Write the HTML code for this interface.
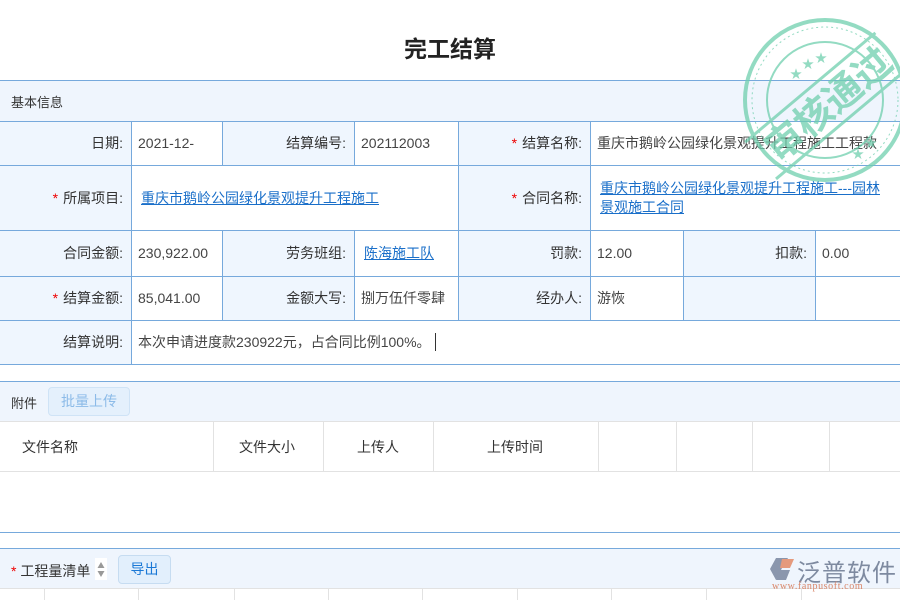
<!DOCTYPE html>
<html><head><meta charset="utf-8"><style>
*{margin:0;padding:0;box-sizing:border-box}
body{width:900px;height:600px;overflow:hidden;background:#fff;position:relative;font-family:"Liberation Sans","Noto Sans CJK SC",sans-serif;font-size:14px;color:#333}
.a{position:absolute}
.c{position:absolute;display:flex;align-items:center}
.l{background:#eff6fe;justify-content:flex-end;padding-right:8px;color:#333}
.v{background:#fff;padding-left:7px;color:#444}
.r{color:#e00;margin-right:5px}
a{color:#1a6fc9;text-decoration:underline}
.hl{position:absolute;left:0;width:900px;height:1px;background:#76a9dc}
.vl{position:absolute;width:1px;background:#76a9dc}
.g{position:absolute;width:1px;background:#e2e2e2}
</style></head><body>
<div class="a" style="left:0;top:30px;width:900px;text-align:center;font-size:23px;font-weight:bold;color:#222">完工结算</div>

<div class="a" style="left:0;top:80px;width:900px;height:41px;background:#eff5fd"></div>
<div class="a" style="left:11px;top:92px;font-size:13px;color:#333">基本信息</div>

<div class="c l" style="left:0;top:121px;width:131px;height:44px">日期:</div>
<div class="c v" style="left:131px;top:121px;width:91px;height:44px">2021-12-</div>
<div class="c l" style="left:222px;top:121px;width:132px;height:44px">结算编号:</div>
<div class="c v" style="left:354px;top:121px;width:104px;height:44px">202112003</div>
<div class="c l" style="left:458px;top:121px;width:132px;height:44px"><span class="r">*</span>结算名称:</div>
<div class="c v" style="left:590px;top:121px;width:310px;height:44px;white-space:nowrap">重庆市鹅岭公园绿化景观提升工程施工工程款</div>

<div class="c l" style="left:0;top:165px;width:131px;height:65px"><span class="r">*</span>所属项目:</div>
<div class="c v" style="left:131px;top:165px;width:327px;height:65px;padding-left:10px"><a>重庆市鹅岭公园绿化景观提升工程施工</a></div>
<div class="c l" style="left:458px;top:165px;width:132px;height:65px"><span class="r">*</span>合同名称:</div>
<div class="c v" style="left:590px;top:165px;width:310px;height:65px;padding-left:10px;padding-right:12px;line-height:19px"><a>重庆市鹅岭公园绿化景观提升工程施工---园林景观施工合同</a></div>

<div class="c l" style="left:0;top:230px;width:131px;height:46px">合同金额:</div>
<div class="c v" style="left:131px;top:230px;width:91px;height:46px">230,922.00</div>
<div class="c l" style="left:222px;top:230px;width:132px;height:46px">劳务班组:</div>
<div class="c v" style="left:354px;top:230px;width:104px;height:46px;padding-left:10px"><a>陈海施工队</a></div>
<div class="c l" style="left:458px;top:230px;width:132px;height:46px">罚款:</div>
<div class="c v" style="left:590px;top:230px;width:93px;height:46px">12.00</div>
<div class="c l" style="left:683px;top:230px;width:132px;height:46px">扣款:</div>
<div class="c v" style="left:815px;top:230px;width:85px;height:46px">0.00</div>

<div class="c l" style="left:0;top:276px;width:131px;height:44px"><span class="r">*</span>结算金额:</div>
<div class="c v" style="left:131px;top:276px;width:91px;height:44px">85,041.00</div>
<div class="c l" style="left:222px;top:276px;width:132px;height:44px">金额大写:</div>
<div class="c v" style="left:354px;top:276px;width:104px;height:44px">捌万伍仟零肆</div>
<div class="c l" style="left:458px;top:276px;width:132px;height:44px">经办人:</div>
<div class="c v" style="left:590px;top:276px;width:93px;height:44px">游恢</div>
<div class="c l" style="left:683px;top:276px;width:132px;height:44px"></div>
<div class="c v" style="left:815px;top:276px;width:85px;height:44px"></div>

<div class="c l" style="left:0;top:320px;width:131px;height:44px">结算说明:</div>
<div class="c v" style="left:131px;top:320px;width:769px;height:44px">本次申请进度款230922元，占合同比例100%。<span style="display:inline-block;width:1px;height:18px;background:#333;margin-left:4px"></span></div>

<div class="hl" style="top:80px"></div>
<div class="hl" style="top:121px"></div>
<div class="hl" style="top:165px"></div>
<div class="hl" style="top:230px"></div>
<div class="hl" style="top:276px"></div>
<div class="hl" style="top:320px"></div>
<div class="hl" style="top:364px"></div>
<div class="vl" style="left:131px;top:121px;height:243px"></div>
<div class="vl" style="left:222px;top:121px;height:44px"></div>
<div class="vl" style="left:222px;top:230px;height:90px"></div>
<div class="vl" style="left:354px;top:121px;height:44px"></div>
<div class="vl" style="left:354px;top:230px;height:90px"></div>
<div class="vl" style="left:458px;top:121px;height:199px"></div>
<div class="vl" style="left:590px;top:121px;height:199px"></div>
<div class="vl" style="left:683px;top:230px;height:90px"></div>
<div class="vl" style="left:815px;top:230px;height:90px"></div>

<div class="a" style="left:0;top:381px;width:900px;height:41px;background:#eff5fd;border-top:1px solid #76a9dc;border-bottom:1px solid #e2e2e2"></div>
<div class="a" style="left:11px;top:393px;font-size:13px;color:#333">附件</div>
<div class="a" style="left:48px;top:387px;width:82px;height:29px;border:1px solid #cfe3f6;background:#e4f0fc;border-radius:4px;color:#8cbbe8;text-align:center;line-height:27px">批量上传</div>
<div class="a" style="left:0;top:471px;width:900px;height:1px;background:#e2e2e2"></div>
<div class="g" style="left:213px;top:422px;height:49px"></div>
<div class="g" style="left:323px;top:422px;height:49px"></div>
<div class="g" style="left:433px;top:422px;height:49px"></div>
<div class="g" style="left:598px;top:422px;height:49px"></div>
<div class="g" style="left:676px;top:422px;height:49px"></div>
<div class="g" style="left:752px;top:422px;height:49px"></div>
<div class="g" style="left:829px;top:422px;height:49px"></div>
<div class="a" style="left:22px;top:437px;color:#333">文件名称</div>
<div class="a" style="left:239px;top:437px;color:#333">文件大小</div>
<div class="a" style="left:357px;top:437px;color:#333">上传人</div>
<div class="a" style="left:487px;top:437px;color:#333">上传时间</div>
<div class="hl" style="top:532px"></div>

<div class="a" style="left:0;top:548px;width:900px;height:41px;background:#eff5fd;border-top:1px solid #76a9dc;border-bottom:1px solid #e2e2e2"></div>
<div class="a" style="left:11px;top:561px;color:#333"><span style="color:#e00">*</span> 工程量清单</div>
<div class="a" style="left:95px;top:558px;width:12px;height:22px;background:#fff"><svg width="12" height="22"><path d="M6 4L9.5 10H2.5Z M6 19L9.5 13H2.5Z" fill="#999"/></svg></div>
<div class="a" style="left:118px;top:555px;width:53px;height:29px;border:1px solid #c6dcf1;background:#e2effc;border-radius:4px;color:#1a78d6;text-align:center;line-height:27px">导出</div>
<div class="g" style="left:44px;top:589px;height:11px"></div>
<div class="g" style="left:138px;top:589px;height:11px"></div>
<div class="g" style="left:234px;top:589px;height:11px"></div>
<div class="g" style="left:328px;top:589px;height:11px"></div>
<div class="g" style="left:422px;top:589px;height:11px"></div>
<div class="g" style="left:517px;top:589px;height:11px"></div>
<div class="g" style="left:611px;top:589px;height:11px"></div>
<div class="g" style="left:706px;top:589px;height:11px"></div>
<div class="g" style="left:801px;top:589px;height:11px"></div>

<svg class="a" style="left:768px;top:556px" width="30" height="26"><path d="M8 2H20L14 12L8 24L2 13Z" fill="#8a96ad"/><path d="M14 3H26L22 12H12Z" fill="#e59a7d"/><path d="M12 14H22L18 24H8Z" fill="#8a96ad"/></svg>
<div class="a" style="left:797px;top:553px;font-size:24px;color:#7e8aa0;letter-spacing:1px">泛普软件</div>
<div class="a" style="left:772px;top:581px;font-size:10px;color:#d9876a;font-family:'Liberation Serif',serif;letter-spacing:0.6px">www.fanpusoft.com</div>

<svg class="a" style="left:730px;top:10px;opacity:0.75" width="180" height="180" viewBox="730 10 180 180">
<g fill="none" stroke="#6fcfae">
<circle cx="825" cy="100" r="80" stroke-width="4"/>
<circle cx="825" cy="100" r="73" stroke-width="1" stroke-dasharray="2 3"/>
<circle cx="825" cy="100" r="58" stroke-width="2"/>
<g transform="rotate(-40 828 104)"><line x1="740" y1="80" x2="910" y2="80" stroke-width="3"/><line x1="740" y1="128" x2="910" y2="128" stroke-width="3"/></g>
</g>
<g fill="#6fcfae" font-size="12"><text x="790" y="78">★</text><text x="802" y="68">★</text><text x="815" y="62">★</text><text x="852" y="158">★</text><text x="865" y="147">★</text></g>
<text x="828" y="118" text-anchor="middle" font-size="38" font-weight="bold" fill="#6fcfae" font-family="Noto Sans CJK SC,sans-serif" transform="rotate(-40 828 104)">审核通过</text>
</svg>
</body></html>
